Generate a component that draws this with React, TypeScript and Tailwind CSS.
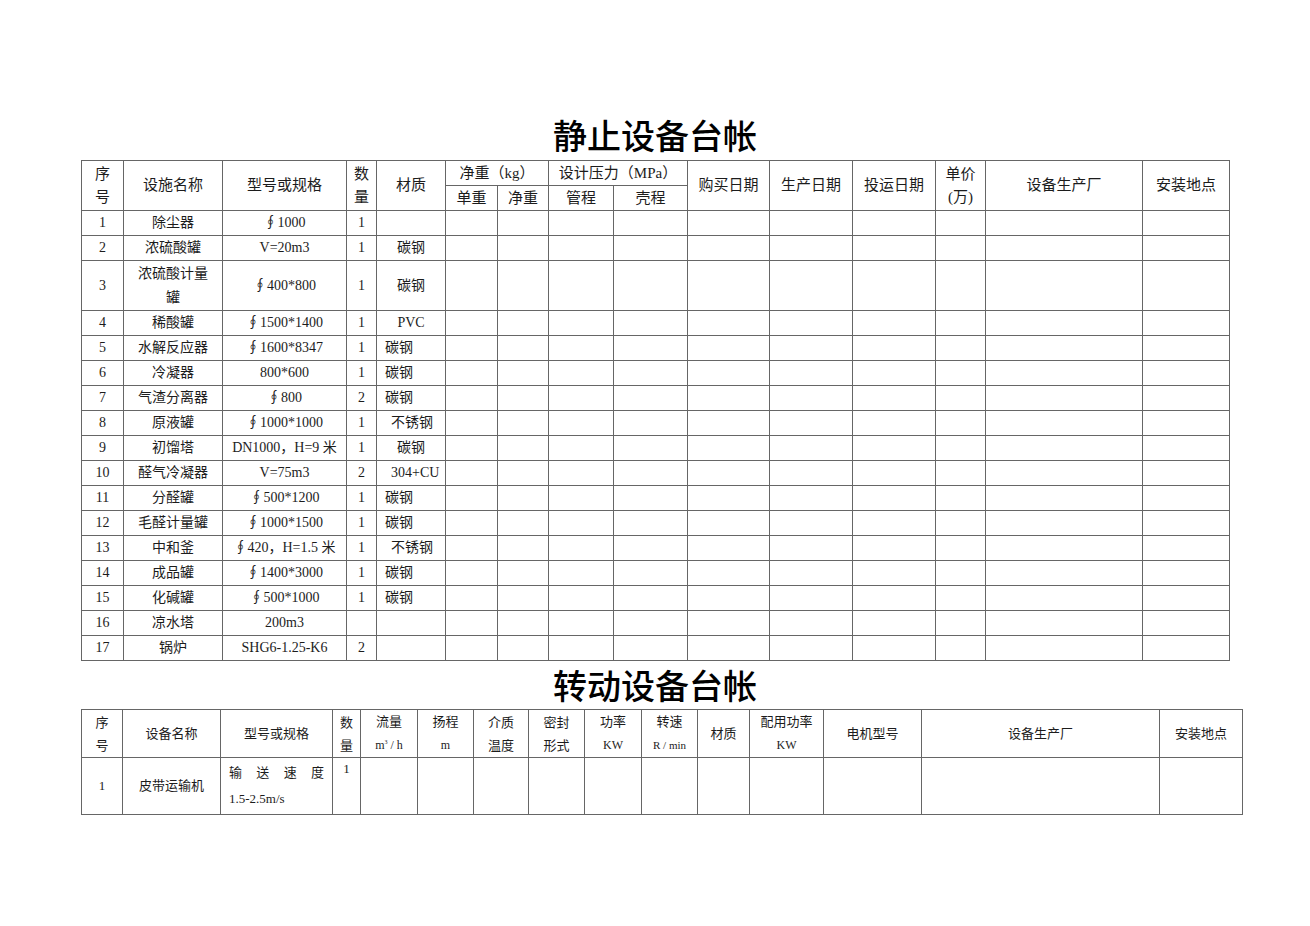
import React from "react";

const FONT = { fontFamily: '"Liberation Serif", "Noto Sans CJK SC", serif' };
const TITLE = { fontFamily: '"Noto Sans CJK SC", sans-serif' };

const cols1 = [42, 99, 124, 30, 69, 52, 51, 65, 74, 82, 83, 83, 50, 157, 87];
const cols2 = [41, 98, 112, 28, 57, 56, 55, 56, 57, 56, 52, 74, 98, 238, 83];

type Row = [string, React.ReactNode, string, string, string, "c" | "l" | "m"];

const rows1: Row[] = [
  ["1", "除尘器", "∮1000", "1", "", "c"],
  ["2", "浓硫酸罐", "V=20m3", "1", "碳钢", "c"],
  ["3", <>浓硫酸计量<br />罐</>, "∮400*800", "1", "碳钢", "c"],
  ["4", "稀酸罐", "∮1500*1400", "1", "PVC", "c"],
  ["5", "水解反应器", "∮1600*8347", "1", "碳钢", "l"],
  ["6", "冷凝器", "800*600", "1", "碳钢", "l"],
  ["7", "气渣分离器", "∮800", "2", "碳钢", "l"],
  ["8", "原液罐", "∮1000*1000", "1", "不锈钢", "m"],
  ["9", "初馏塔", "DN1000，H=9 米", "1", "碳钢", "c"],
  ["10", "醛气冷凝器", "V=75m3", "2", "304+CU", "m"],
  ["11", "分醛罐", "∮500*1200", "1", "碳钢", "l"],
  ["12", "毛醛计量罐", "∮1000*1500", "1", "碳钢", "l"],
  ["13", "中和釜", "∮420，H=1.5 米", "1", "不锈钢", "m"],
  ["14", "成品罐", "∮1400*3000", "1", "碳钢", "l"],
  ["15", "化碱罐", "∮500*1000", "1", "碳钢", "l"],
  ["16", "凉水塔", "200m3", "", "", "c"],
  ["17", "锅炉", "SHG6-1.25-K6", "2", "", "c"],
];

const td = "border border-[#666] p-0 text-center align-middle";

export default function App() {
  return (
    <div className="min-h-[926px] bg-white text-[#1c1c1c] pl-[81px] pt-[110px]" style={FONT}>
      <div className="w-[1148px] h-[50px] text-center text-[34px] leading-[50px] font-medium text-black" style={TITLE}>
        静止设备台帐
      </div>
      <table className="border-collapse table-fixed w-[1148px] text-[14px]">
        <colgroup>
          {cols1.map((w, i) => (
            <col key={i} style={{ width: w }} />
          ))}
        </colgroup>
        <thead className="text-[15px] leading-[23px] font-normal">
          <tr className="h-[25px]">
            <td rowSpan={2} className={td}>序<br />号</td>
            <td rowSpan={2} className={td}>设施名称</td>
            <td rowSpan={2} className={td}>型号或规格</td>
            <td rowSpan={2} className={td}>数<br />量</td>
            <td rowSpan={2} className={td}>材质</td>
            <td colSpan={2} className={td}>净重（kg）</td>
            <td colSpan={2} className={td}>设计压力（MPa）</td>
            <td rowSpan={2} className={td}>购买日期</td>
            <td rowSpan={2} className={td}>生产日期</td>
            <td rowSpan={2} className={td}>投运日期</td>
            <td rowSpan={2} className={td}>单价<br />(万)</td>
            <td rowSpan={2} className={td}>设备生产厂</td>
            <td rowSpan={2} className={td}>安装地点</td>
          </tr>
          <tr className="h-[25px]">
            <td className={td}>单重</td>
            <td className={td}>净重</td>
            <td className={td}>管程</td>
            <td className={td}>壳程</td>
          </tr>
        </thead>
        <tbody className="leading-[20px]">
          {rows1.map((r, i) => (
            <tr key={i} className={i === 2 ? "h-[50px] leading-[24px]" : "h-[25px]"}>
              <td className={td}>{r[0]}</td>
              <td className={td}>{r[1]}</td>
              <td className={td}>{r[2]}</td>
              <td className={td}>{r[3]}</td>
              <td
                className={
                  r[5] === "c"
                    ? td
                    : r[5] === "l"
                    ? "border border-[#666] p-0 pl-[8px] text-left align-middle"
                    : "border border-[#666] p-0 pl-[14px] text-left align-middle"
                }
              >
                {r[4]}
              </td>
              {Array.from({ length: 10 }).map((_, j) => (
                <td key={j} className={td}></td>
              ))}
            </tr>
          ))}
        </tbody>
      </table>

      <div className="w-[1148px] h-[48px] text-center text-[34px] leading-[48px] font-medium text-black" style={TITLE}>
        转动设备台帐
      </div>
      <table className="border-collapse table-fixed w-[1161px] text-[13px]">
        <colgroup>
          {cols2.map((w, i) => (
            <col key={i} style={{ width: w }} />
          ))}
        </colgroup>
        <thead className="leading-[23px]">
          <tr className="h-[48px]">
            <td className={td}>序<br />号</td>
            <td className={td}>设备名称</td>
            <td className={td}>型号或规格</td>
            <td className={td}>数<br />量</td>
            <td className={td}>流量<br /><span className="text-[12px]">m<sup className="text-[6px] -top-[5px]">3</sup> / h</span></td>
            <td className={td}>扬程<br /><span className="text-[12px]">m</span></td>
            <td className={td}>介质<br />温度</td>
            <td className={td}>密封<br />形式</td>
            <td className={td}>功率<br /><span className="text-[12px]">KW</span></td>
            <td className={td}>转速<br /><span className="text-[11px]">R / min</span></td>
            <td className={td}>材质</td>
            <td className={td}>配用功率<br /><span className="text-[12px]">KW</span></td>
            <td className={td}>电机型号</td>
            <td className={td}>设备生产厂</td>
            <td className={td}>安装地点</td>
          </tr>
        </thead>
        <tbody>
          <tr className="h-[57px]">
            <td className={td}>1</td>
            <td className={td}>皮带运输机</td>
            <td className="border border-[#666] px-[8px] py-0 text-left align-middle leading-[26px]">
              <div className="flex justify-between">
                <span>输</span><span>送</span><span>速</span><span>度</span>
              </div>
              <div>1.5-2.5m/s</div>
            </td>
            <td className="border border-[#666] p-0 text-center align-top leading-[22px]">1</td>
            {Array.from({ length: 11 }).map((_, j) => (
              <td key={j} className={td}></td>
            ))}
          </tr>
        </tbody>
      </table>
    </div>
  );
}
